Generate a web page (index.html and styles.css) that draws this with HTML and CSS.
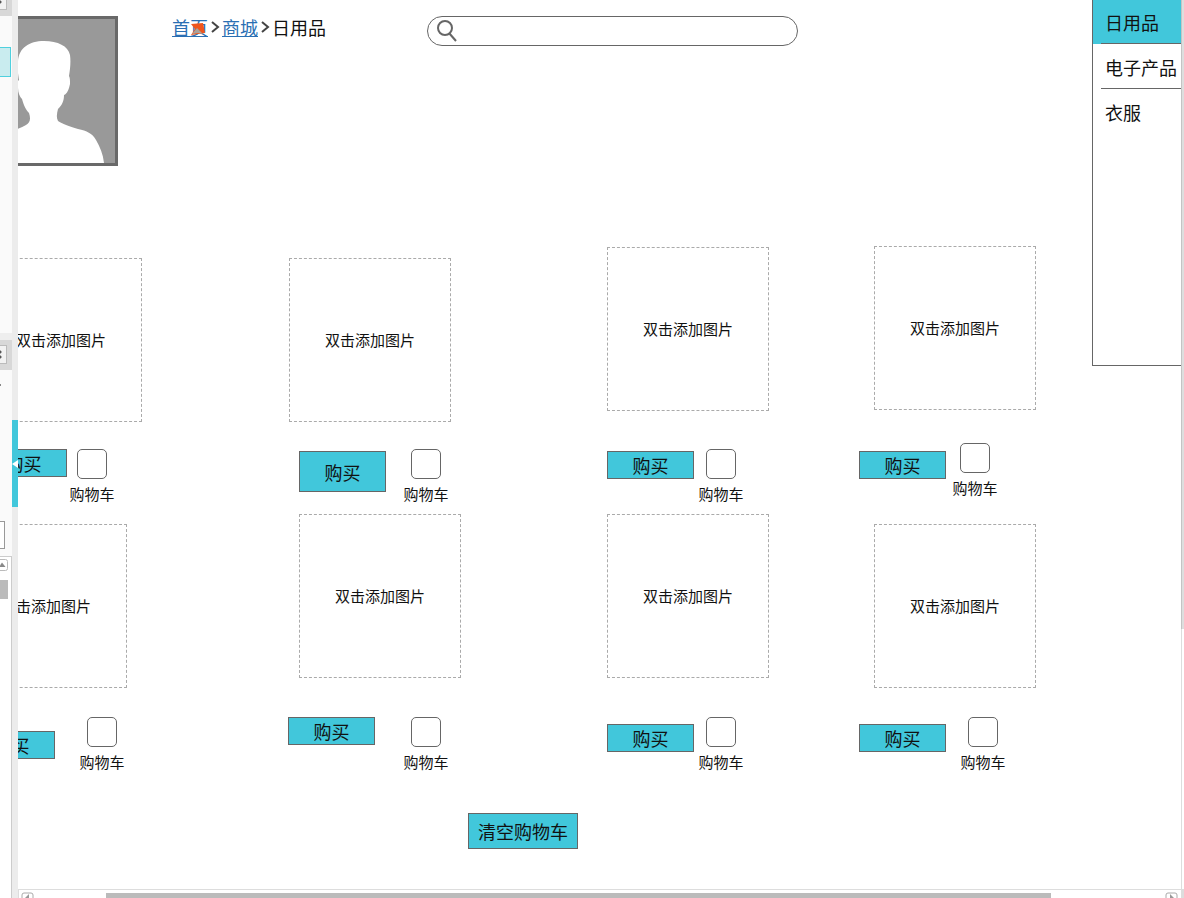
FILE: index.html
```html
<!DOCTYPE html>
<html lang="zh-CN">
<head>
<meta charset="utf-8">
<title>日用品</title>
<link rel="stylesheet" href="styles.css">
</head>
<body>
<div class="app">
  <aside class="panel">
    <div class="panel-head panel-head-top"><span class="head-button head-button-top"></span></div>
    <div class="panel-list"><div class="selected-row"></div></div>
    <div class="panel-gap"></div>
    <div class="panel-head"><span class="head-button"></span></div>
    <div class="panel-tools"><span class="tick"></span><span class="field"></span></div>
    <div class="panel-tree">
      <span class="arrow-up"><svg width="8" height="12" viewBox="0 0 8 12"><path d="M0 .5h5.500q2 0 2 2v7q0 2-2 2H0" fill="#fff" stroke="#bbb"/><path d="M-1 8L2 3.500 5.500 8z" fill="#888"/></svg></span>
      <span class="tree-thumb"></span>
    </div>
  </aside>
  <div class="splitter"><div class="splitter-handle"><svg width="6" height="8" viewBox="0 0 6 8"><path d="M0 4l6-4v8z" fill="#fff"/></svg></div></div>
  <main class="workspace">
    <div class="canvas">
      <div class="widget avatar">
        <svg width="144" height="144" viewBox="0 0 144 144" role="img" aria-label="头像"><path d="M73 22C58 22 48 29 47 42c-1 7 0 13 1 19-2 1-2 4-1 8 0 5 2 9 4 11 2 7 4 11 7 14 2 6 1 10-3 12-9 6-24 7-32 14-6 6-10 15-11 24h121c-1-9-4-16-8-23-4-7-9-9-18-11-9-3-16-5-20-8-2-4-1-8 0-12 4-4 6-8 6-14 3-1 5-6 6-11 0-4 0-6-1-8 1-6 2-14 1-21C97 27 87 22 73 22z" fill="#fff"/></svg>
      </div>

      <nav class="widget breadcrumb">
        <a href="#home">首页</a>
        <svg class="chevron" width="9" height="12" viewBox="0 0 9 12"><path d="M1 1l6 5-6 5" fill="none" stroke="#444" stroke-width="2"/></svg>
        <a href="#mall">商城</a>
        <svg class="chevron" width="9" height="12" viewBox="0 0 9 12"><path d="M1 1l6 5-6 5" fill="none" stroke="#444" stroke-width="2"/></svg>
        <span>日用品</span>
        <svg class="link-mark" width="16" height="14" viewBox="0 0 16 14"><path d="M1 2l12-1 2 10-7 1-7 1 4-6z" fill="#f0561d"/><path d="M2 12l5-6 3 3 3 3-5-1z" fill="#a9a29b"/></svg>
      </nav>

      <label class="widget search">
        <svg width="22" height="22" viewBox="0 0 22 22"><circle cx="9" cy="8" r="7" fill="none" stroke="#666" stroke-width="2"/><path d="M13 13l7 8" stroke="#666" stroke-width="2"/></svg>
        <input type="search" aria-label="搜索">
      </label>

      <ul class="widget menu">
        <li class="active"><button type="button">日用品</button></li>
        <li><button type="button">电子产品</button></li>
        <li><button type="button">衣服</button></li>
      </ul>

      <div class="widget picture pic-a1">双击添加图片</div>
      <div class="widget picture pic-a2">双击添加图片</div>
      <div class="widget picture pic-a3">双击添加图片</div>
      <div class="widget picture pic-a4">双击添加图片</div>
      <button type="button" class="widget buy buy-a1">购买</button>
      <button type="button" class="widget buy buy-a2">购买</button>
      <button type="button" class="widget buy buy-a3">购买</button>
      <button type="button" class="widget buy buy-a4">购买</button>
      <label class="widget cart cart-a1"><input type="checkbox">购物车</label>
      <label class="widget cart cart-a2"><input type="checkbox">购物车</label>
      <label class="widget cart cart-a3"><input type="checkbox">购物车</label>
      <label class="widget cart cart-a4"><input type="checkbox">购物车</label>

      <div class="widget picture pic-b1">双击添加图片</div>
      <div class="widget picture pic-b2">双击添加图片</div>
      <div class="widget picture pic-b3">双击添加图片</div>
      <div class="widget picture pic-b4">双击添加图片</div>
      <button type="button" class="widget buy buy-b1">购买</button>
      <button type="button" class="widget buy buy-b2">购买</button>
      <button type="button" class="widget buy buy-b3">购买</button>
      <button type="button" class="widget buy buy-b4">购买</button>
      <label class="widget cart cart-b1"><input type="checkbox">购物车</label>
      <label class="widget cart cart-b2"><input type="checkbox">购物车</label>
      <label class="widget cart cart-b3"><input type="checkbox">购物车</label>
      <label class="widget cart cart-b4"><input type="checkbox">购物车</label>

      <button type="button" class="widget buy clear">清空购物车</button>
    </div>
    <div class="scrollbar">
      <svg width="14" height="6" viewBox="0 0 14 6"><path d="M1 6V3q0-2 2-2h7q2 0 2 2v3" fill="#fff" stroke="#aaa"/><path d="M4 6l4-4v4z" fill="#999"/></svg>
      <div class="track"><div class="thumb"></div></div>
      <svg width="14" height="6" viewBox="0 0 14 6"><path d="M1 6V3q0-2 2-2h7q2 0 2 2v3" fill="#fff" stroke="#aaa"/><path d="M5 2v4h4z" fill="#999"/></svg>
    </div>
  </main>
  <div class="edge"><div class="edge-thumb"></div><div class="edge-track"></div><div class="edge-corner"></div></div>
</div>
</body>
</html>
```

FILE: styles.css
```css
* { box-sizing: border-box; }
body {
  margin: 0;
  background: #fff;
  color: #111;
  font-family: "Noto Sans CJK SC", sans-serif;
  font-size: 18px;
  line-height: 24px;
}
button { font: inherit; color: inherit; cursor: pointer; }
svg { display: block; }

.app { display: flex; height: 100vh; overflow: hidden; }

/* Left tool panel */
.panel {
  flex: none;
  width: 12px;
  display: flex;
  flex-direction: column;
  overflow: hidden;
  background: #fafafa;
}
.panel-head { flex: none; height: 30px; padding-top: 5px; background: #d8d8d8; }
.panel-head-top { height: 16px; padding-top: 0; }
.head-button {
  display: block;
  width: 7px;
  height: 19px;
  border: 1px solid #bbb;
  border-left: 0;
  background: radial-gradient(circle at 0 6px, #555 1px, transparent 2px), radial-gradient(circle at 0 11px, #555 1px, transparent 2px), #f2f2f2;
}
.head-button-top {
  height: 10px;
  border-top: 0;
  background: radial-gradient(circle at 0 2px, #555 1px, transparent 2px), #f2f2f2;
}
.panel-list { flex: none; height: 317px; padding-top: 31px; }
.selected-row {
  width: 11px;
  height: 30px;
  border: 1px solid #4fd0de;
  border-left: 0;
  background: #c9ecef;
}
.panel-gap { flex: none; height: 7px; background: #eee; }
.panel-tools { flex: none; height: 186px; padding-top: 14px; }
.tick { display: block; width: 1px; height: 2px; background: #888; }
.field {
  display: block;
  width: 5px;
  height: 28px;
  margin-top: 135px;
  border: 1px solid #999;
  border-left: 0;
  background: #fff;
}
.panel-tree {
  flex: 1;
  padding-top: 2px;
  border-top: 1px solid #ccc;
  border-right: 1px solid #ccc;
  background: #fff;
}
.arrow-up { display: block; }
.tree-thumb { display: block; width: 8px; height: 19px; margin-top: 9px; background: #bbb; }

.splitter { flex: none; width: 6px; padding-top: 420px; background: #ececec; }
.splitter-handle { display: flex; align-items: center; height: 87px; background: #41c7db; }

/* Design canvas */
.workspace { flex: 1; min-width: 0; display: flex; flex-direction: column; }
.canvas { position: relative; flex: 1; min-height: 0; overflow: hidden; }
.widget { position: absolute; }

.avatar {
  left: -50px;
  top: 16px;
  border: 3px solid #696969;
  background: #999;
}

.breadcrumb {
  left: 154px;
  top: 15px;
  display: flex;
  align-items: center;
  gap: 3px;
  white-space: nowrap;
}
.breadcrumb a { color: #2a6fb3; text-decoration: underline; }
.chevron { flex: none; margin-right: -1px; }
.link-mark { position: absolute; left: 18px; top: 7px; }

.search {
  left: 409px;
  top: 16px;
  width: 371px;
  height: 30px;
  display: flex;
  align-items: center;
  padding: 0 12px 0 8px;
  border: 1px solid #666;
  border-radius: 15px;
}
.search input {
  flex: 1;
  min-width: 0;
  border: 0;
  outline: 0;
  background: transparent;
  font: inherit;
}

.menu {
  left: 1074px;
  top: -1px;
  width: 160px;
  height: 367px;
  margin: 0;
  padding: 0;
  border: 1px solid #666;
  border-top: 0;
  list-style: none;
}
.menu li { height: 45px; background: linear-gradient(#666, #666) 8px 100% / 100% 1px no-repeat; }
.menu li:last-child { background: none; }
.menu .active { background-color: #41c7db; }
.menu button {
  display: block;
  width: 100%;
  height: 45px;
  padding: 0 12px;
  border: 0;
  background: none;
  text-align: left;
}

.picture {
  width: 162px;
  height: 164px;
  display: flex;
  align-items: center;
  justify-content: center;
  border: 1px dashed #aaa;
  font-size: 15px;
  white-space: nowrap;
}
.pic-a1 { left: -38px; top: 258px; }
.pic-a2 { left: 271px; top: 258px; }
.pic-a3 { left: 589px; top: 247px; }
.pic-a4 { left: 856px; top: 246px; }
.pic-b1 { left: -53px; top: 524px; }
.pic-b2 { left: 281px; top: 514px; }
.pic-b3 { left: 589px; top: 514px; }
.pic-b4 { left: 856px; top: 524px; }

.buy {
  width: 87px;
  height: 28px;
  padding: 0;
  border: 1px solid #666;
  background: #41c7db;
}
.buy-a1 { left: -38px; top: 449px; }
.buy-a2 { left: 281px; top: 451px; height: 41px; }
.buy-a3 { left: 589px; top: 451px; }
.buy-a4 { left: 841px; top: 451px; }
.buy-b1 { left: -50px; top: 731px; }
.buy-b2 { left: 270px; top: 717px; }
.buy-b3 { left: 589px; top: 724px; }
.buy-b4 { left: 841px; top: 724px; }
.clear { left: 450px; top: 813px; width: 110px; height: 36px; }

.cart {
  width: 46px;
  display: flex;
  flex-direction: column;
  align-items: center;
  gap: 3px;
  font-size: 15px;
  white-space: nowrap;
}
.cart input {
  appearance: none;
  width: 30px;
  height: 30px;
  margin: 0;
  border: 1px solid #666;
  border-radius: 5px;
  background: #fff;
}
.cart input:checked { background: #41c7db; }
.cart-a1 { left: 51px; top: 449px; }
.cart-a2 { left: 385px; top: 449px; }
.cart-a3 { left: 680px; top: 449px; }
.cart-a4 { left: 934px; top: 443px; }
.cart-b1 { left: 61px; top: 717px; }
.cart-b2 { left: 385px; top: 717px; }
.cart-b3 { left: 680px; top: 717px; }
.cart-b4 { left: 942px; top: 717px; }

/* Canvas scrollbars */
.scrollbar {
  flex: none;
  height: 9px;
  display: flex;
  align-items: flex-end;
  padding: 0 2px;
  border: 1px solid #ddd;
  border-width: 1px 0 0 1px;
}
.track { flex: 1; height: 5px; padding: 0 114px 0 71px; }
.thumb { height: 5px; background: #bbb; }

.edge { flex: none; width: 3px; display: flex; flex-direction: column; }
.edge-thumb { height: 70%; border-left: 1px solid #c4c4c4; background: #dedede; }
.edge-track { flex: 1; border-left: 1px solid #ddd; }
.edge-corner { height: 9px; background: #ddd; }
```
